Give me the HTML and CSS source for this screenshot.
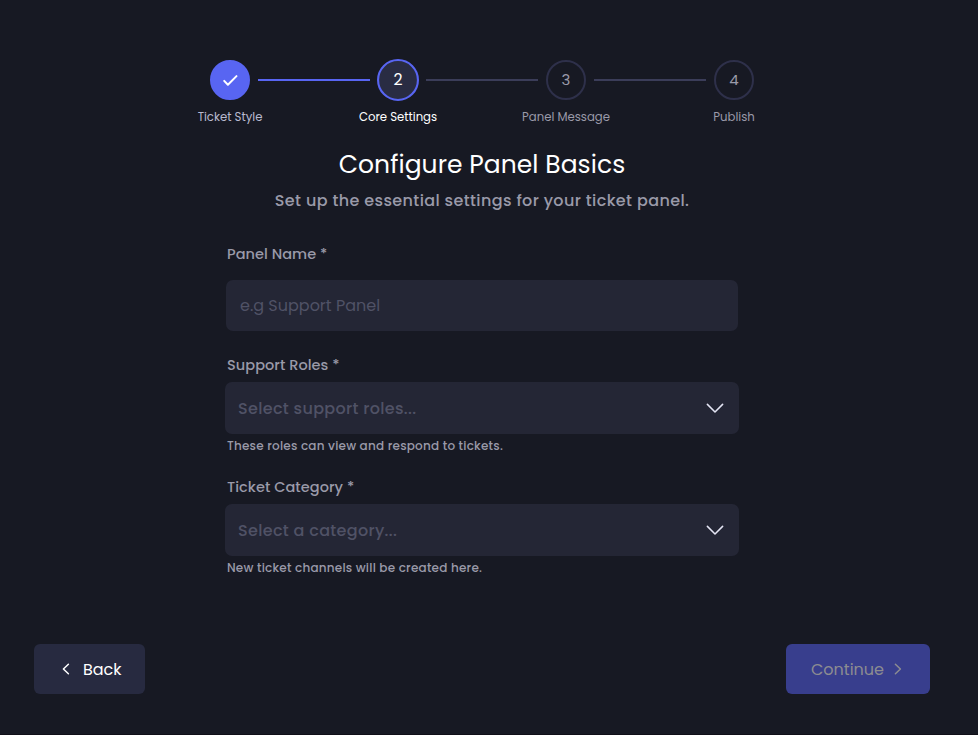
FILE: index.html
```html
<!DOCTYPE html>
<html lang="en">
<head>
    <meta charset="UTF-8">
    <meta name="viewport" content="width=device-width, initial-scale=1.0">
    <title>Configure Panel Basics</title>
    <link rel="stylesheet" href="styles.css">
</head>
<body>
    <main class="wizard">
        <div class="stepper">
            <div class="step done">
                <div class="step-circle">
                    <svg width="20" height="20" viewBox="0 0 20 20"><path d="M4.2 10.9l3.7 3.8 8.6-8.6"/></svg>
                </div>
                <span class="step-label">Ticket Style</span>
            </div>
            <div class="step-line filled"></div>
            <div class="step active">
                <div class="step-circle">2</div>
                <span class="step-label">Core Settings</span>
            </div>
            <div class="step-line"></div>
            <div class="step">
                <div class="step-circle">3</div>
                <span class="step-label">Panel Message</span>
            </div>
            <div class="step-line"></div>
            <div class="step">
                <div class="step-circle">4</div>
                <span class="step-label">Publish</span>
            </div>
        </div>

        <header class="heading">
            <h1>Configure Panel Basics</h1>
            <p>Set up the essential settings for your ticket panel.</p>
        </header>

        <form class="form">
            <div class="field field-name">
                <label for="panel-name">Panel Name *</label>
                <input class="control" id="panel-name" type="text" placeholder="e.g Support Panel">
            </div>
            <div class="field field-roles">
                <label>Support Roles *</label>
                <div class="control select">
                    <span>Select support roles...</span>
                    <svg width="18" height="10" viewBox="0 0 18 10"><path d="M1.4 1.4L9 9l7.6-7.6"/></svg>
                </div>
                <small>These roles can view and respond to tickets.</small>
            </div>
            <div class="field field-category">
                <label>Ticket Category *</label>
                <div class="control select">
                    <span>Select a category...</span>
                    <svg width="18" height="10" viewBox="0 0 18 10"><path d="M1.4 1.4L9 9l7.6-7.6"/></svg>
                </div>
                <small>New ticket channels will be created here.</small>
            </div>
        </form>

        <footer class="actions">
            <button class="btn btn-back" type="button">
                <svg width="8" height="12" viewBox="0 0 8 12"><path d="M6.4 1.2L1.4 6l5 4.8"/></svg>
                <span>Back</span>
            </button>
            <button class="btn btn-continue" type="button" disabled>
                <span>Continue</span>
                <svg width="8" height="12" viewBox="0 0 8 12"><path d="M1.4 1.2l5 4.8-5 4.8"/></svg>
            </button>
        </footer>
    </main>
</body>
</html>
```

FILE: styles.css
```css
:root {
    --bg: #171923;
    --surface: #242635;
    --border: #2e304a;
    --primary: #5865f2;
    --text: #ffffff;
    --muted: #9a9aa9;
    --placeholder: #505266;
}

* {
    box-sizing: border-box;
}

body {
    margin: 0;
    background: var(--bg);
    color: var(--text);
    font-family: Poppins, Inter, "Open Sans", sans-serif;
}

svg {
    display: block;
    fill: none;
    stroke: currentColor;
    stroke-linecap: round;
    stroke-linejoin: round;
}

.wizard {
    display: flex;
    flex-direction: column;
    align-items: center;
    height: 735px;
    padding: 60px 48px 40px 34px;
    border-bottom: 1px solid #100f18;
}

/* Stepper */
.stepper {
    display: flex;
    width: 544px;
    height: 66px;
}

.step {
    display: flex;
    flex-direction: column;
    align-items: center;
    width: 40px;
    color: var(--muted);
}

.step-circle {
    display: flex;
    align-items: center;
    justify-content: center;
    flex: none;
    width: 40px;
    height: 40px;
    padding-bottom: 1px;
    border: 2px solid var(--border);
    border-radius: 50%;
    font-size: 15px;
}

.step-label {
    margin-top: 9px;
    font-size: 11.7px;
    line-height: 16px;
    white-space: nowrap;
}

.done .step-circle {
    padding: 0;
    background: var(--primary);
    border-color: var(--primary);
    color: var(--text);
}

.done svg {
    stroke-width: 2;
}

.done .step-label {
    color: #b9bad0;
}

.active .step-circle {
    background: #292c43;
    border-color: var(--primary);
    transform: scale(1.05);
}

.active {
    color: var(--text);
}

.step-line {
    flex: 1;
    height: 2px;
    margin: 19px 8px 0;
    background: #3b3d59;
}

.step-line.filled {
    background: var(--primary);
}

/* Heading */
.heading {
    text-align: center;
    white-space: nowrap;
}

.heading h1 {
    margin: 22px 0 0;
    font-size: 25px;
    font-weight: 400;
    line-height: 34px;
    letter-spacing: 0.05px;
}

.heading p {
    margin: 7px 0 0;
    color: var(--muted);
    font-size: 16px;
    font-weight: 500;
    line-height: 24px;
    letter-spacing: 0.37px;
}

/* Form */
.form {
    width: 514px;
    margin-top: 29px;
}

.field {
    display: flex;
    flex-direction: column;
    white-space: nowrap;
}

.field label {
    padding-left: 2px;
    color: var(--muted);
    font-size: 14.5px;
    font-weight: 500;
    line-height: 24px;
    letter-spacing: 0.05px;
}

.field small {
    margin-top: 3px;
    padding-left: 2px;
    color: var(--muted);
    font-size: 12px;
    font-weight: 500;
    line-height: 18px;
    letter-spacing: 0.22px;
}

.control {
    height: 52px;
    border: 0;
    border-radius: 7px;
    background: var(--surface);
    color: var(--text);
    font: inherit;
    font-size: 16px;
}

input.control {
    height: 51px;
    margin: 14px 1px 0;
    padding: 0 14px;
}

input.control::placeholder {
    color: var(--placeholder);
    opacity: 1;
}

.select {
    display: flex;
    align-items: center;
    justify-content: space-between;
    margin-top: 5px;
    padding: 0 15px 0 13px;
    color: var(--placeholder);
    font-weight: 500;
    letter-spacing: 0.32px;
}

.select svg {
    color: #e4e5f4;
    stroke-width: 1.5;
}

.field-roles {
    margin-top: 22px;
}

.field-category {
    margin-top: 20px;
}

/* Actions */
.actions {
    display: flex;
    justify-content: space-between;
    width: 100%;
    margin-top: auto;
}

.btn {
    display: flex;
    align-items: center;
    height: 50px;
    border: 0;
    border-radius: 6px;
    color: var(--text);
    font: inherit;
    font-size: 16px;
}

.btn svg {
    stroke-width: 1.5;
}

.btn-back {
    gap: 13px;
    width: 111px;
    padding: 0 0 0 28px;
    background: #272a40;
}

.btn-continue {
    justify-content: space-between;
    width: 144px;
    padding: 0 28px 0 25px;
    background: #383e8d;
    color: #8c8c91;
}
```
